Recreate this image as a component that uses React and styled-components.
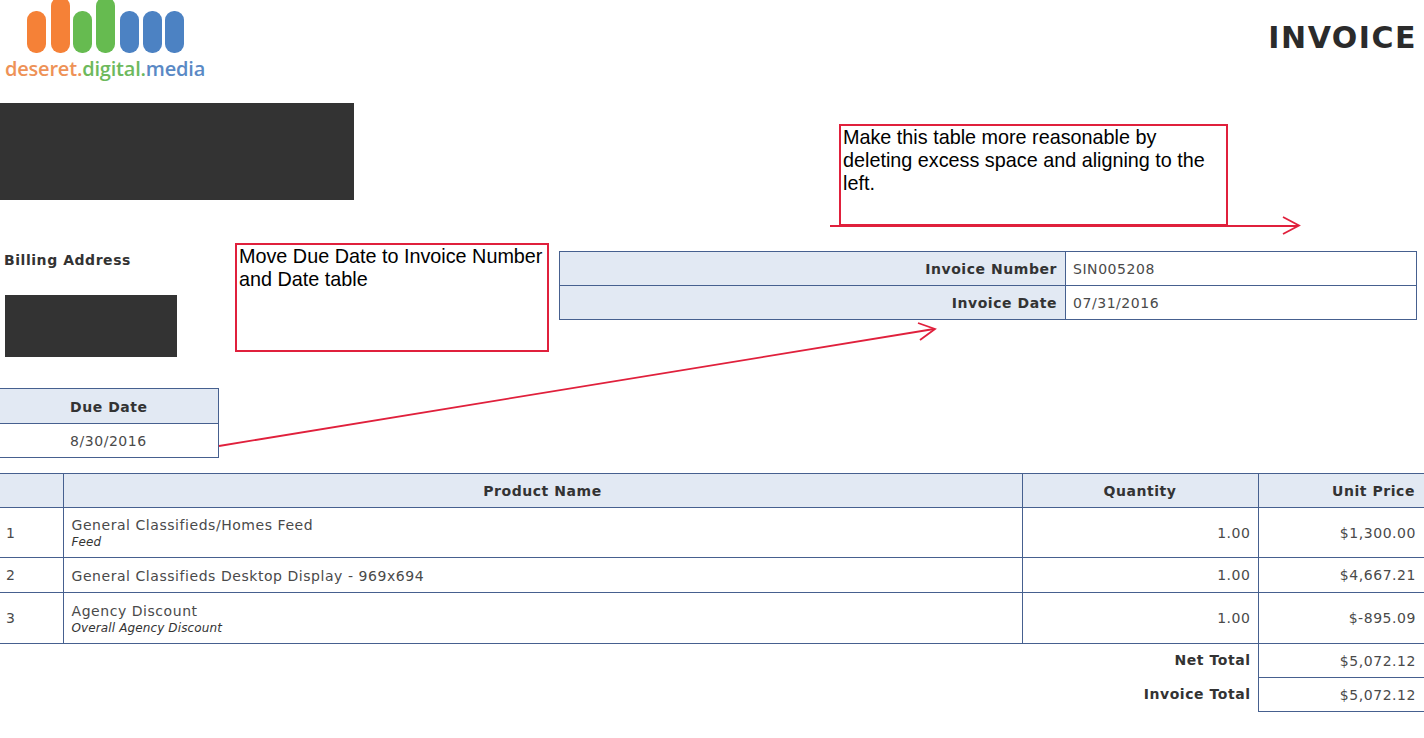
import styled, { createGlobalStyle } from "styled-components";

const GlobalStyle = createGlobalStyle`
  html, body {
    margin: 0;
    padding: 0;
    background: #fff;
  }
  * {
    box-sizing: border-box;
  }
`;

const Page = styled.div`
  position: relative;
  width: 1424px;
  height: 738px;
  overflow: hidden;
  font-family: "DejaVu Sans", Verdana, sans-serif;
  font-size: 14px;
  letter-spacing: 0.55px;
  color: #4a4a4a;
`;

const Header = styled.header`
  display: flex;
  justify-content: space-between;
  height: 103px;
`;

const Title = styled.h1`
  margin: 19px 7px 0 0;
  font-size: 30px;
  line-height: 38px;
  font-weight: 700;
  letter-spacing: 1.5px;
  color: #2b2b2b;
`;

const TopSection = styled.section`
  display: flex;
  justify-content: space-between;
  height: 370px;
`;

const LeftColumn = styled.div`
  display: flex;
  flex-direction: column;
`;

const Redacted = styled.div`
  background: #333333;
  width: ${(p) => p.$w}px;
  height: ${(p) => p.$h}px;
  margin-left: ${(p) => p.$left || 0}px;
`;

const BillingLabel = styled.div`
  margin: 52px 0 26px 4px;
  font-weight: 700;
  line-height: 17px;
  color: #333;
`;

const DueTable = styled.table`
  margin-top: 31px;
  width: 219px;
  border-collapse: collapse;
  table-layout: fixed;
`;

const DueHead = styled.th`
  height: 35px;
  padding: 1px 0 0 70px;
  text-align: left;
  font-weight: 700;
  color: #333;
  background: #e2e9f3;
  border: 1px solid #46608f;
  border-left: none;
`;

const DueCell = styled.td`
  height: 34px;
  padding: 0 0 0 70px;
  border: 1px solid #46608f;
  border-left: none;
`;

const InvoiceMeta = styled.table`
  margin: 148px 7px 0 0;
  width: 858px;
  height: 69px;
  border-collapse: collapse;
  table-layout: fixed;
  align-self: flex-start;
`;

const MetaLabel = styled.th`
  width: 506px;
  padding: 0 8px 0 0;
  text-align: right;
  font-weight: 700;
  color: #333;
  background: #e2e9f3;
  border: 1px solid #46608f;
`;

const MetaValue = styled.td`
  padding: 0 0 0 7px;
  border: 1px solid #46608f;
`;

const ProductsTable = styled.table`
  width: 1424px;
  border-collapse: collapse;
  table-layout: fixed;
`;

const HeadCell = styled.th`
  height: 34px;
  padding: 0 ${(p) => (p.$align === "right" ? "9px" : "0")} 0 0;
  text-align: ${(p) => p.$align || "center"};
  font-weight: 700;
  color: #333;
  background: #e2e9f3;
  border: 1px solid #46608f;
  &:first-child {
    border-left: none;
  }
  &:last-child {
    border-right: none;
  }
`;

const Cell = styled.td`
  height: ${(p) => p.$h}px;
  padding: ${(p) => (p.$name ? "2px" : "0")} ${(p) => p.$right || 8}px 0 ${(p) => (p.$first ? "6px" : "8px")};
  text-align: ${(p) => (p.$num ? "right" : "left")};
  border: 1px solid #46608f;
  line-height: 16px;
  &:first-child {
    border-left: none;
  }
  &:last-child {
    border-right: none;
  }
`;

const SubText = styled.div`
  margin-top: 2px;
  font-size: 12px;
  letter-spacing: 0.12px;
  font-style: italic;
  line-height: 15px;
  color: #333;
`;

const TotalLabel = styled.td`
  height: 34px;
  padding: 0 7px 1px 0;
  text-align: right;
  font-weight: 700;
  color: #333;
`;

const TotalValue = styled.td`
  height: 34px;
  padding: 0 8px 0 0;
  text-align: right;
  border: 1px solid #46608f;
  border-right: none;
`;

const Note = styled.div`
  position: absolute;
  left: ${(p) => p.$x}px;
  top: ${(p) => p.$y}px;
  width: ${(p) => p.$w}px;
  height: ${(p) => p.$h}px;
  padding: 0 2px;
  border: 2px solid #e0203c;
  font-family: "Liberation Sans", Arial, sans-serif;
  font-size: 19.8px;
  letter-spacing: 0;
  line-height: 23px;
  color: #000;
`;

const Arrows = styled.svg`
  position: absolute;
  left: 0;
  top: 0;
  pointer-events: none;
`;

function Logo() {
  const bars = [
    [27, 11, "#f58137", 42],
    [51, -3, "#f58137", 56],
    [73, 11, "#66bb50", 42],
    [96, -3, "#66bb50", 56],
    [120, 11, "#4c82c3", 42],
    [143, 11, "#4c82c3", 42],
    [165, 11, "#4c82c3", 42],
  ];
  return (
    <svg width="212" height="84" viewBox="0 0 212 84">
      {bars.map(([x, y, c, h], i) => (
        <rect key={i} x={x} y={y} width="19" height={h} rx="9" fill={c} />
      ))}
      <text x="5" y="76" fontFamily="'Open Sans', sans-serif" fontWeight="600" fontSize="20" letterSpacing="-0.2">
        <tspan fill="#ee9257">deseret.</tspan>
        <tspan fill="#6db95c">digital.</tspan>
        <tspan fill="#5a89c5">media</tspan>
      </text>
    </svg>
  );
}

const rows = [
  { n: 1, name: "General Classifieds/Homes Feed", sub: "Feed", price: "$1,300.00", h: 50 },
  { n: 2, name: "General Classifieds Desktop Display - 969x694", price: "$4,667.21", h: 35 },
  { n: 3, name: "Agency Discount", sub: "Overall Agency Discount", price: "$-895.09", h: 51 },
];

export default function App() {
  return (
    <Page>
      <GlobalStyle />
      <Header>
        <Logo />
        <Title>INVOICE</Title>
      </Header>

      <TopSection>
        <LeftColumn>
          <Redacted $w={354} $h={97} />
          <BillingLabel>Billing Address</BillingLabel>
          <Redacted $w={172} $h={62} $left={5} />
          <DueTable>
            <tbody>
              <tr>
                <DueHead>Due Date</DueHead>
              </tr>
              <tr>
                <DueCell>8/30/2016</DueCell>
              </tr>
            </tbody>
          </DueTable>
        </LeftColumn>
        <InvoiceMeta>
          <tbody>
            <tr>
              <MetaLabel>Invoice Number</MetaLabel>
              <MetaValue>SIN005208</MetaValue>
            </tr>
            <tr>
              <MetaLabel>Invoice Date</MetaLabel>
              <MetaValue>07/31/2016</MetaValue>
            </tr>
          </tbody>
        </InvoiceMeta>
      </TopSection>

      <ProductsTable>
        <colgroup>
          <col style={{ width: 63 }} />
          <col style={{ width: 959 }} />
          <col style={{ width: 236 }} />
          <col style={{ width: 166 }} />
        </colgroup>
        <thead>
          <tr>
            <HeadCell />
            <HeadCell>Product Name</HeadCell>
            <HeadCell>Quantity</HeadCell>
            <HeadCell $align="right">Unit Price</HeadCell>
          </tr>
        </thead>
        <tbody>
          {rows.map((r) => (
            <tr key={r.n}>
              <Cell $first $h={r.h}>{r.n}</Cell>
              <Cell $name $h={r.h}>
                {r.name}
                {r.sub && <SubText>{r.sub}</SubText>}
              </Cell>
              <Cell $num $right={7} $h={r.h}>1.00</Cell>
              <Cell $num $h={r.h}>{r.price}</Cell>
            </tr>
          ))}
          <tr>
            <TotalLabel colSpan={3}>Net Total</TotalLabel>
            <TotalValue>$5,072.12</TotalValue>
          </tr>
          <tr>
            <TotalLabel colSpan={3}>Invoice Total</TotalLabel>
            <TotalValue>$5,072.12</TotalValue>
          </tr>
        </tbody>
      </ProductsTable>

      <Note $x={235} $y={243} $w={314} $h={109}>
        Move Due Date to Invoice Number and Date table
      </Note>
      <Note $x={839} $y={124} $w={389} $h={102}>
        Make this table more reasonable by deleting excess space and aligning to the left.
      </Note>

      <Arrows width="1424" height="738" fill="none" stroke="#e0203c" strokeWidth="1.8">
        <path d="M830 226H1298" />
        <path d="M1283 217L1299 225.5L1283 234" />
        <path d="M219 446L934 329" />
        <path d="M918 323L935 329L920 340" />
      </Arrows>
    </Page>
  );
}
